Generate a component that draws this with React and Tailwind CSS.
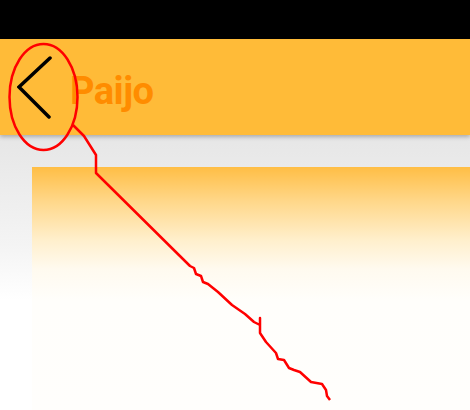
export default function App() {
  return (
    <div className="relative w-[470px] h-[410px] overflow-hidden bg-white" style={{ fontFamily: "Roboto, 'Liberation Sans', sans-serif" }}>
      {/* status bar */}
      <div className="h-[39px] bg-black" />

      {/* app bar */}
      <div className="relative z-10 h-[96px] bg-[#FFBB38] flex items-center shadow-[0_2px_4px_rgba(0,0,0,0.25)]">
        <button className="w-[64px] h-full flex items-center justify-center pl-[10px]">
          <svg width="40" height="64" viewBox="0 0 40 64">
            <path d="M33 3 L2 32 L32 62" fill="none" stroke="#000" strokeWidth="3.5" strokeLinecap="round" />
          </svg>
        </button>
        <h1 className="text-[38px] font-bold text-[#FF8C00] ml-[6px] mt-[8px] tracking-[-0.5px]">Paijo</h1>
      </div>

      {/* body */}
      <div className="h-[275px] bg-[linear-gradient(to_bottom,#E6E6E6_0%,#F4F4F4_40%,#FFFFFF_60%,#FFFFFF_100%)] pt-[32px] pl-[32px]">
        <div className="h-full bg-[linear-gradient(to_bottom,#FFBE45_0%,#FFD789_14%,#FFEFCC_30%,#FFFAEF_42%,#FFFEFB_55%,#FFFEFC_100%)]" />
      </div>

      {/* annotation */}
      <svg className="absolute inset-0 z-20 pointer-events-none" width="470" height="410" viewBox="0 0 470 410">
        <ellipse cx="43.5" cy="97" rx="34" ry="53" fill="none" stroke="#FF0000" strokeWidth="2.5" />
        <path
          d="M73 125 L84 136 L96 155 L96 173 L190 266 L194 268 L196 274 L201 276 L203 282 L208 284 L218 292 L232 305 L245 314 L254 322 L260 325 L260 318 L260 333 L266 342 L276 353 L278 359 L284 360 L289 368 L294 370 L300 372 L311 382 L322 384 L326 390 L327 396 L330 400"
          fill="none"
          stroke="#FF0000"
          strokeWidth="2.5"
          strokeLinejoin="round"
        />
      </svg>
    </div>
  );
}
